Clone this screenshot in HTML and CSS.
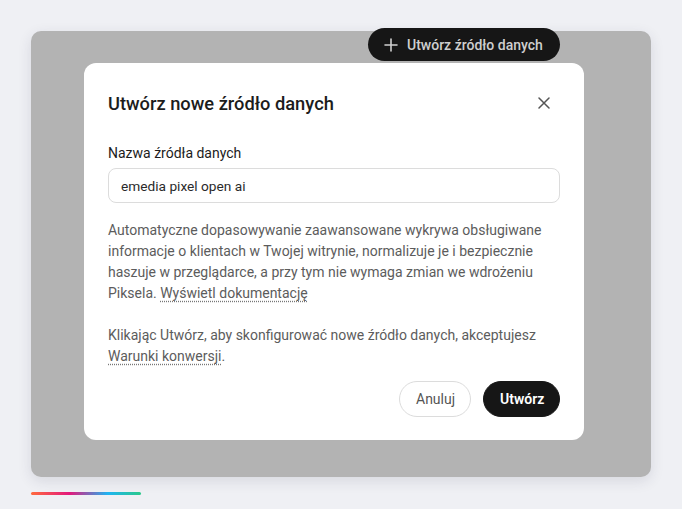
FILE: index.html
```html
<!DOCTYPE html>
<html lang="pl">
<head>
<meta charset="utf-8">
<title>Utwórz nowe źródło danych</title>
<link rel="stylesheet" href="styles.css">
</head>
<body>
<div class="page">
  <div class="panel">
    <button class="create-top" type="button">
      <svg class="plus" width="14" height="14" viewBox="0 0 14 14" aria-hidden="true"><path d="M7 1v12M1 7h12" stroke="currentColor" stroke-width="1.6" stroke-linecap="round" fill="none"/></svg>
      <span>Utwórz źródło danych</span>
    </button>
    <div class="modal" role="dialog">
      <div class="modal-head">
        <h2 class="modal-title">Utwórz nowe źródło danych</h2>
        <button class="close" type="button" aria-label="Zamknij">
          <svg width="12" height="12" viewBox="0 0 12 12" aria-hidden="true"><path d="M1 1l10 10M11 1L1 11" stroke="currentColor" stroke-width="1.5" stroke-linecap="round" fill="none"/></svg>
        </button>
      </div>
      <label class="field-label" for="name">Nazwa źródła danych</label>
      <div class="input">emedia pixel open ai</div>
      <p class="desc">Automatyczne dopasowywanie zaawansowane wykrywa obsługiwane informacje o klientach w Twojej witrynie, normalizuje je i bezpiecznie haszuje w przeglądarce, a przy tym nie wymaga zmian we wdrożeniu Piksela. <a class="link">Wyświetl dokumentację</a></p>
      <p class="desc terms">Klikając Utwórz, aby skonfigurować nowe źródło danych, akceptujesz <a class="link">Warunki konwersji</a>.</p>
      <div class="actions">
        <button class="btn btn-ghost" type="button">Anuluj</button>
        <button class="btn btn-dark" type="button">Utwórz</button>
      </div>
    </div>
  </div>
  <div class="rainbow"></div>
</div>
</body>
</html>
```
FILE: styles.css
```css
* { box-sizing: border-box; }
html, body { margin: 0; padding: 0; }
body {
  background: #eff0f4;
  font-family: Roboto, "Noto Sans", "Liberation Sans", sans-serif;
  color: #1c1c1c;
  width: 682px;
  height: 509px;
  overflow: hidden;
}
.page {
  padding: 31px 31px 0 31px;
}
.panel {
  position: relative;
  width: 620px;
  height: 446px;
  background: #b3b3b3;
  border-radius: 10px;
  box-shadow: 0 4px 14px rgba(40, 44, 70, 0.12);
}
.create-top {
  position: absolute;
  left: 337px;
  top: -3px;
  height: 33px;
  width: 192px;
  padding: 0 0 0 16px;
  border: none;
  border-radius: 17px;
  background: #161616;
  color: #cfcfcf;
  font-family: inherit;
  font-size: 14px;
  font-weight: 500;
  display: flex;
  align-items: center;
  gap: 9px;
}
.create-top .plus { color: #cfcfcf; }
.modal {
  position: absolute;
  left: 53px;
  top: 32px;
  width: 500px;
  height: 377px;
  background: #fff;
  border-radius: 12px;
  padding: 24px 24px 23px 24px;
  display: flex;
  flex-direction: column;
}
.modal-head {
  height: 32px;
  display: flex;
  align-items: center;
  justify-content: space-between;
}
.modal-title {
  margin: 0;
  font-size: 18.3px;
  font-weight: 500;
  color: #1c1c1c;
}
.close {
  border: none;
  background: none;
  padding: 0;
  width: 20px;
  height: 20px;
  display: flex;
  align-items: center;
  justify-content: center;
  color: #555;
  margin-right: 6px;
}
.field-label {
  margin-top: 24px;
  font-size: 14px;
  line-height: 20px;
  color: #1c1c1c;
}
.input {
  margin-top: 5px;
  height: 35px;
  border: 1px solid #dcdcdc;
  border-radius: 8px;
  padding: 0 12px;
  display: flex;
  align-items: center;
  font-size: 13.7px;
  color: #2a2a2a;
}
.desc {
  margin: 17px 0 0 0;
  font-size: 14px;
  line-height: 21px;
  color: #5c5c5c;
}
.terms { margin-top: 21px; }
.link {
  color: #5c5c5c;
  text-decoration: underline dotted #777;
  text-underline-offset: 3px;
}
.actions {
  margin-top: auto;
  display: flex;
  justify-content: flex-end;
  gap: 12px;
}
.btn {
  height: 36px;
  border-radius: 18px;
  font-family: inherit;
  font-size: 14px;
  padding: 0 16px;
}
.btn-ghost {
  width: 72px;
  background: #fff;
  border: 1px solid #dcdcdc;
  color: #555;
}
.btn-dark {
  width: 77px;
  background: #161616;
  border: 1px solid #161616;
  color: #fff;
  font-weight: 600;
}
.rainbow {
  margin-top: 15px;
  width: 110px;
  height: 3px;
  border-radius: 2px;
  background: linear-gradient(90deg, #ff6a3d 0%, #e3197c 35%, #1fb5f2 70%, #2bc98a 100%);
}
```
